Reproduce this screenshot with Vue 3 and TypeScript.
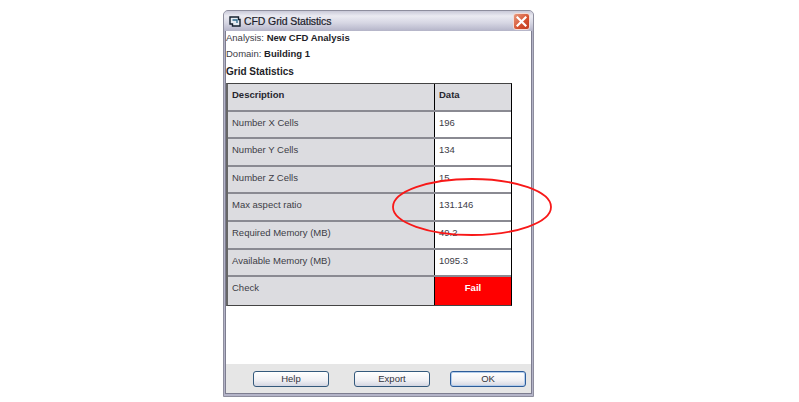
<template>
  <div class="page">
    <div class="window">
      <div class="titlebar">
        <svg class="app-icon" width="12" height="11" viewBox="0 0 12 11">
          <path d="M1 1h8.5v2.5H11V10H3.5V8H1z" fill="#e6ecf2" stroke="#14202e" stroke-width="1.4" />
          <path d="M3.5 4h4.5v3" fill="none" stroke="#2c6a8c" stroke-width="1.3" />
        </svg>
        <span class="title">CFD Grid Statistics</span>
        <button class="close">
          <svg width="11" height="11" viewBox="0 0 11 11">
            <path d="M1.5 1.5l8 8M9.5 1.5l-8 8" stroke="#fff" stroke-width="2.2" stroke-linecap="square" />
          </svg>
        </button>
      </div>
      <div class="body">
        <div class="content">
          <p class="info">Analysis: <b>New CFD Analysis</b></p>
          <p class="info">Domain: <b>Building 1</b></p>
          <p class="heading">Grid Statistics</p>
          <div class="grid">
            <div class="row head">
              <div class="cell label">Description</div>
              <div class="cell value">Data</div>
            </div>
            <div v-for="row in rows" :key="row.label" class="row">
              <div class="cell label">{{ row.label }}</div>
              <div class="cell value">{{ row.value }}</div>
            </div>
            <div class="row last">
              <div class="cell label">Check</div>
              <div class="cell value fail">Fail</div>
            </div>
          </div>
        </div>
        <div class="footer">
          <button class="btn">Help</button>
          <button class="btn export">Export</button>
          <button class="btn default">OK</button>
        </div>
      </div>
    </div>
    <svg class="circle" width="164" height="62" viewBox="0 0 164 62">
      <ellipse cx="82" cy="31" rx="79" ry="28" fill="none" stroke="#f81818" stroke-width="1.8" />
    </svg>
  </div>
</template>

<script setup lang="ts">
interface StatRow {
  label: string;
  value: string;
}

const rows: StatRow[] = [
  { label: 'Number X Cells', value: '196' },
  { label: 'Number Y Cells', value: '134' },
  { label: 'Number Z Cells', value: '15' },
  { label: 'Max aspect ratio', value: '131.146' },
  { label: 'Required Memory (MB)', value: '49.2' },
  { label: 'Available Memory (MB)', value: '1095.3' }
];
</script>

<style>
html,
body {
  margin: 0;
  background: #fff;
}
</style>

<style scoped>
.page {
  position: relative;
  width: 799px;
  height: 402px;
  padding: 10px 0 0 223px;
  box-sizing: border-box;
  overflow: hidden;
  font-family: "Liberation Sans", Arial, sans-serif;
  font-size: 9.5px;
  color: #3c3c46;
}

.window {
  width: 311px;
  height: 387px;
  box-sizing: border-box;
  display: flex;
  flex-direction: column;
  border: 1px solid #8e8e9e;
  border-radius: 5px 5px 0 0;
  background: #b4b4c8;
}

.titlebar {
  height: 20px;
  flex: none;
  display: flex;
  align-items: center;
  padding: 0 3px 0 5px;
  border-radius: 4px 4px 0 0;
  background: linear-gradient(#c9c9d8 0%, #ebebf2 25%, #d6d6e3 60%, #b4b4c8 100%);
}

.app-icon {
  flex: none;
  margin-right: 3px;
}

.title {
  flex: 1;
  font-size: 10.5px;
  letter-spacing: -0.1px;
  color: #1c1c2a;
  -webkit-text-stroke: 0.2px #1c1c2a;
}

.close {
  width: 17px;
  height: 17px;
  padding: 0;
  display: flex;
  align-items: center;
  justify-content: center;
  border: 1px solid #f4dcd6;
  border-radius: 3px;
  background: linear-gradient(135deg, #e89a80, #d4502e 60%, #c23c20);
}

.body {
  flex: 1;
  display: flex;
  flex-direction: column;
  margin: 0 1px 2px;
  border: 1px solid #7d7d90;
  border-top: none;
  background: #fff;
  min-height: 0;
}

.content {
  flex: 1;
  min-height: 0;
}

.info {
  margin: 0;
  height: 16px;
  line-height: 13px;
  white-space: nowrap;
}

.info b {
  color: #1e1e28;
}

.heading {
  margin: 0;
  height: 20px;
  line-height: 18px;
  font-weight: bold;
  font-size: 10px;
  color: #1e1e28;
}

.grid {
  width: 286px;
  box-sizing: border-box;
  border-top: 1px solid #444;
  border-left: 2px solid #666;
  border-right: 1px solid #000;
  border-bottom: 1px solid #444;
}

.row {
  display: flex;
  height: 27.6px;
  box-sizing: border-box;
  border-bottom: 2px solid #8a8a92;
}

.row.head {
  font-weight: bold;
  color: #26262e;
}

.row.last {
  border-bottom: none;
}

.cell {
  box-sizing: border-box;
  padding: 5px 0 0 4px;
  white-space: nowrap;
}

.label {
  width: 207px;
  background: #dcdce0;
  border-right: 1.5px solid #000;
}

.value {
  flex: 1;
  padding-left: 4px;
}

.head .value {
  background: #dcdce0;
}

.fail {
  padding: 5px 0 0;
  text-align: center;
  font-weight: bold;
  color: #fff;
  background: #ff0000;
}

.footer {
  height: 29px;
  flex: none;
  display: flex;
  align-items: center;
  padding-left: 27px;
  background: #e6e6e6;
}

.btn {
  flex: none;
  width: 76px;
  height: 16px;
  padding: 0;
  font: 9.5px "Liberation Sans", Arial, sans-serif;
  color: #33333c;
  border: 1px solid #34597c;
  border-radius: 3px;
  background: linear-gradient(#ffffff, #f0f0f4 60%, #d4d6e2);
}

.btn.export {
  margin: 0 20px 0 25px;
}

.btn.default {
  border-color: #2c5c9a;
  box-shadow: inset 0 0 0 1px #b4cdec;
}

.circle {
  position: absolute;
  left: 390px;
  top: 176px;
}
</style>
